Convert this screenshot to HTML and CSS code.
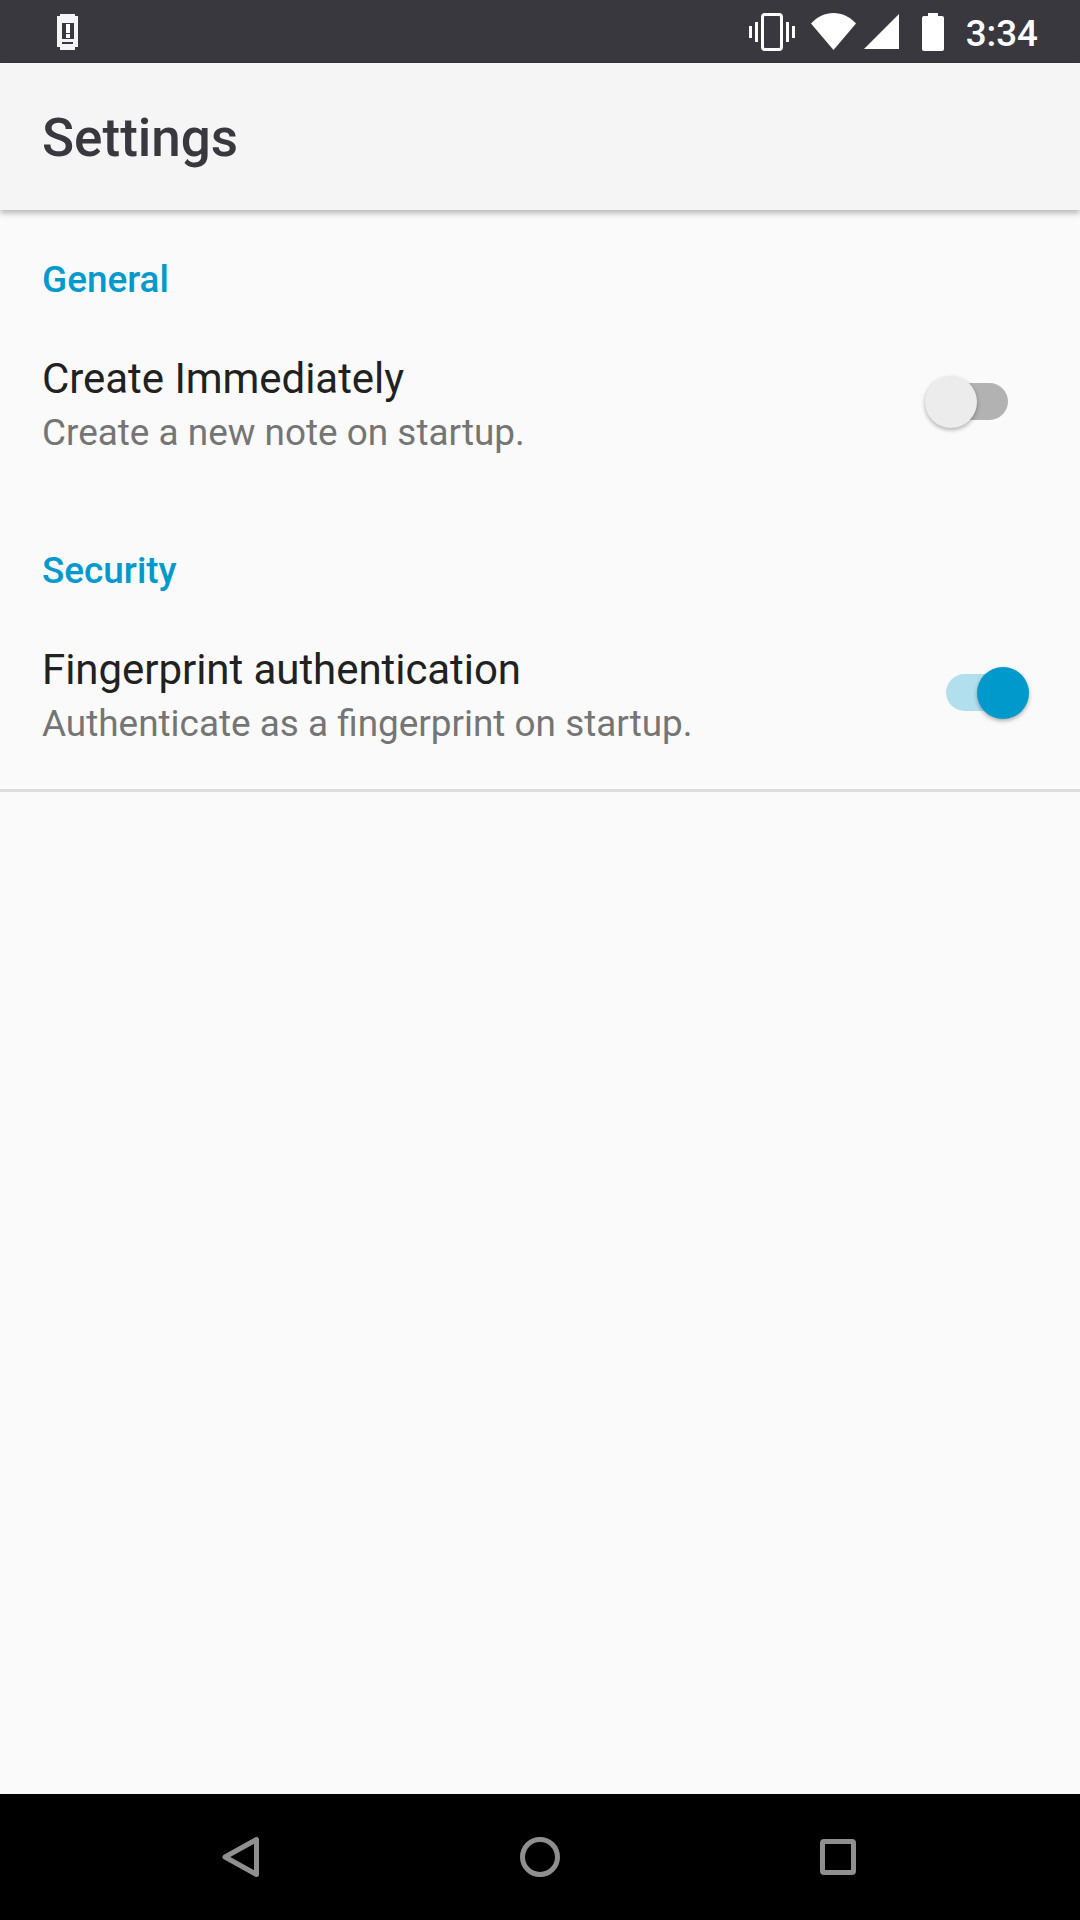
FILE: index.html
```html
<!DOCTYPE html>
<html>
<head>
  <meta charset="UTF-8">
  <title>Settings</title>
  <link rel="stylesheet" href="styles.css">
</head>
<body>
<div class="screen">
  <div class="status-bar">
    <svg class="notif-icon" width="21" height="36" viewBox="0 0 21 36">
      <path fill="#fff" d="M3 0h15v2h3v31h-3v3H3v-3H0V2h3z" opacity="0.95"/>
      <path fill="#39383f" d="M5 9h12v16H5zM0 0h3v2H0zM18 0h3v2h-3zM5 28h11v2H5z"/>
      <path fill="#fff" d="M9 10h4v9H9zM9 20h4v4H9z"/>
    </svg>
    <div class="status-right">
      <svg width="46" height="38" viewBox="0 0 46 38">
        <rect x="13.5" y="1.5" width="19" height="35" rx="2.5" fill="none" stroke="#fff" stroke-width="3"/>
        <path fill="#fff" d="M6 9h3v20H6zM0 13h3v12H0zM37 9h3v20h-3zM43 13h3v12h-3z"/>
      </svg>
      <svg class="wifi-icon" width="45" height="37" viewBox="0 0 45 37">
        <path fill="#fff" d="M22.500 37L0 10.500C6 4 14 0 22.500 0S39 4 45 10.500z"/>
      </svg>
      <svg class="signal-icon" width="35" height="35" viewBox="0 0 35 35">
        <path fill="#fff" d="M0 35L35 0v35z"/>
      </svg>
      <svg class="battery-icon" width="22" height="38" viewBox="0 0 22 38">
        <path fill="#fff" d="M6 0h10v3h4a2 2 0 0 1 2 2v31a2 2 0 0 1-2 2H2a2 2 0 0 1-2-2V5a2 2 0 0 1 2-2h4z"/>
      </svg>
      <span class="clock">3:34</span>
    </div>
  </div>

  <div class="app-bar">Settings</div>

  <div class="content">
    <div class="section">
      <div class="section-title">General</div>
      <div class="pref-row">
        <div class="pref-text">
          <div class="pref-title">Create Immediately</div>
          <div class="pref-summary">Create a new note on startup.</div>
        </div>
        <div class="switch">
          <div class="track"></div>
          <div class="thumb"></div>
        </div>
      </div>
    </div>

    <div class="section last">
      <div class="section-title">Security</div>
      <div class="pref-row">
        <div class="pref-text">
          <div class="pref-title">Fingerprint authentication</div>
          <div class="pref-summary">Authenticate as a fingerprint on startup.</div>
        </div>
        <div class="switch on">
          <div class="track"></div>
          <div class="thumb"></div>
        </div>
      </div>
    </div>
  </div>

  <div class="nav-bar">
    <svg width="48" height="48" viewBox="0 0 48 48">
      <path d="M38.500 6.500v35L7 24z" fill="none" stroke="#8f8f8f" stroke-width="5" stroke-linejoin="round"/>
    </svg>
    <svg width="48" height="48" viewBox="0 0 48 48">
      <circle cx="24" cy="24" r="17.500" fill="none" stroke="#8f8f8f" stroke-width="5"/>
    </svg>
    <svg width="48" height="48" viewBox="0 0 48 48">
      <rect x="8.500" y="8.500" width="31" height="31" rx="1.500" fill="none" stroke="#8f8f8f" stroke-width="5"/>
    </svg>
  </div>
</div>
</body>
</html>
```

FILE: styles.css
```css
* {
  box-sizing: border-box;
}

body {
  margin: 0;
  padding: 0;
  background-color: #fafafa;
  font-family: Roboto, "Liberation Sans", sans-serif;
}

.screen {
  display: flex;
  flex-direction: column;
  width: 1080px;
  height: 1920px;
  overflow: hidden;
}

.status-bar {
  display: flex;
  align-items: center;
  justify-content: space-between;
  flex: none;
  height: 63px;
  padding: 0 42px 0 57px;
  background-color: #39383f;
}

.status-right {
  display: flex;
  align-items: center;
}

.wifi-icon {
  margin-left: 16px;
}

.signal-icon {
  margin-left: 8px;
}

.battery-icon {
  margin-left: 23px;
}

.clock {
  margin-left: 22px;
  padding-top: 4px;
  color: #fff;
  font-size: 36.75px;
  font-weight: 500;
}

.app-bar {
  position: relative;
  z-index: 1;
  flex: none;
  height: 147px;
  padding-left: 42px;
  background-color: #f5f5f5;
  color: #39383f;
  font-size: 53px;
  font-weight: 500;
  line-height: 151px;
  box-shadow: 0 3px 6px rgba(0, 0, 0, 0.28);
}

.content {
  flex: 1;
}

.section {
  height: 291px;
  padding: 48px 0 0 42px;
}

.section.last {
  border-bottom: 3px solid #dcdcdc;
}

.section-title {
  margin-bottom: 48px;
  color: #0099cc;
  font-size: 36.9px;
  font-weight: 500;
  line-height: 44px;
}

.pref-row {
  display: flex;
  align-items: center;
  justify-content: space-between;
  padding-right: 51px;
}

.pref-title {
  color: #212121;
  font-size: 42px;
  letter-spacing: -0.05px;
  line-height: 57px;
}

.pref-summary {
  color: #757575;
  font-size: 36.9px;
  line-height: 52px;
}

.switch {
  position: relative;
  display: flex;
  align-items: center;
  width: 104px;
  height: 52px;
  margin-bottom: 6px;
}

.track {
  width: 62px;
  height: 37px;
  margin-left: 21px;
  border-radius: 19px;
  background-color: #b2b2b2;
}

.thumb {
  position: absolute;
  top: 0;
  left: 0;
  width: 52px;
  height: 52px;
  border-radius: 50%;
  background-color: #ececec;
  box-shadow: 0 2px 4px rgba(0, 0, 0, 0.3);
}

.switch.on .track {
  background-color: #b2dfee;
}

.switch.on .thumb {
  left: 52px;
  background-color: #0099cc;
}

.nav-bar {
  display: flex;
  align-items: center;
  justify-content: center;
  gap: 250px;
  flex: none;
  height: 126px;
  background-color: #000;
}
```
